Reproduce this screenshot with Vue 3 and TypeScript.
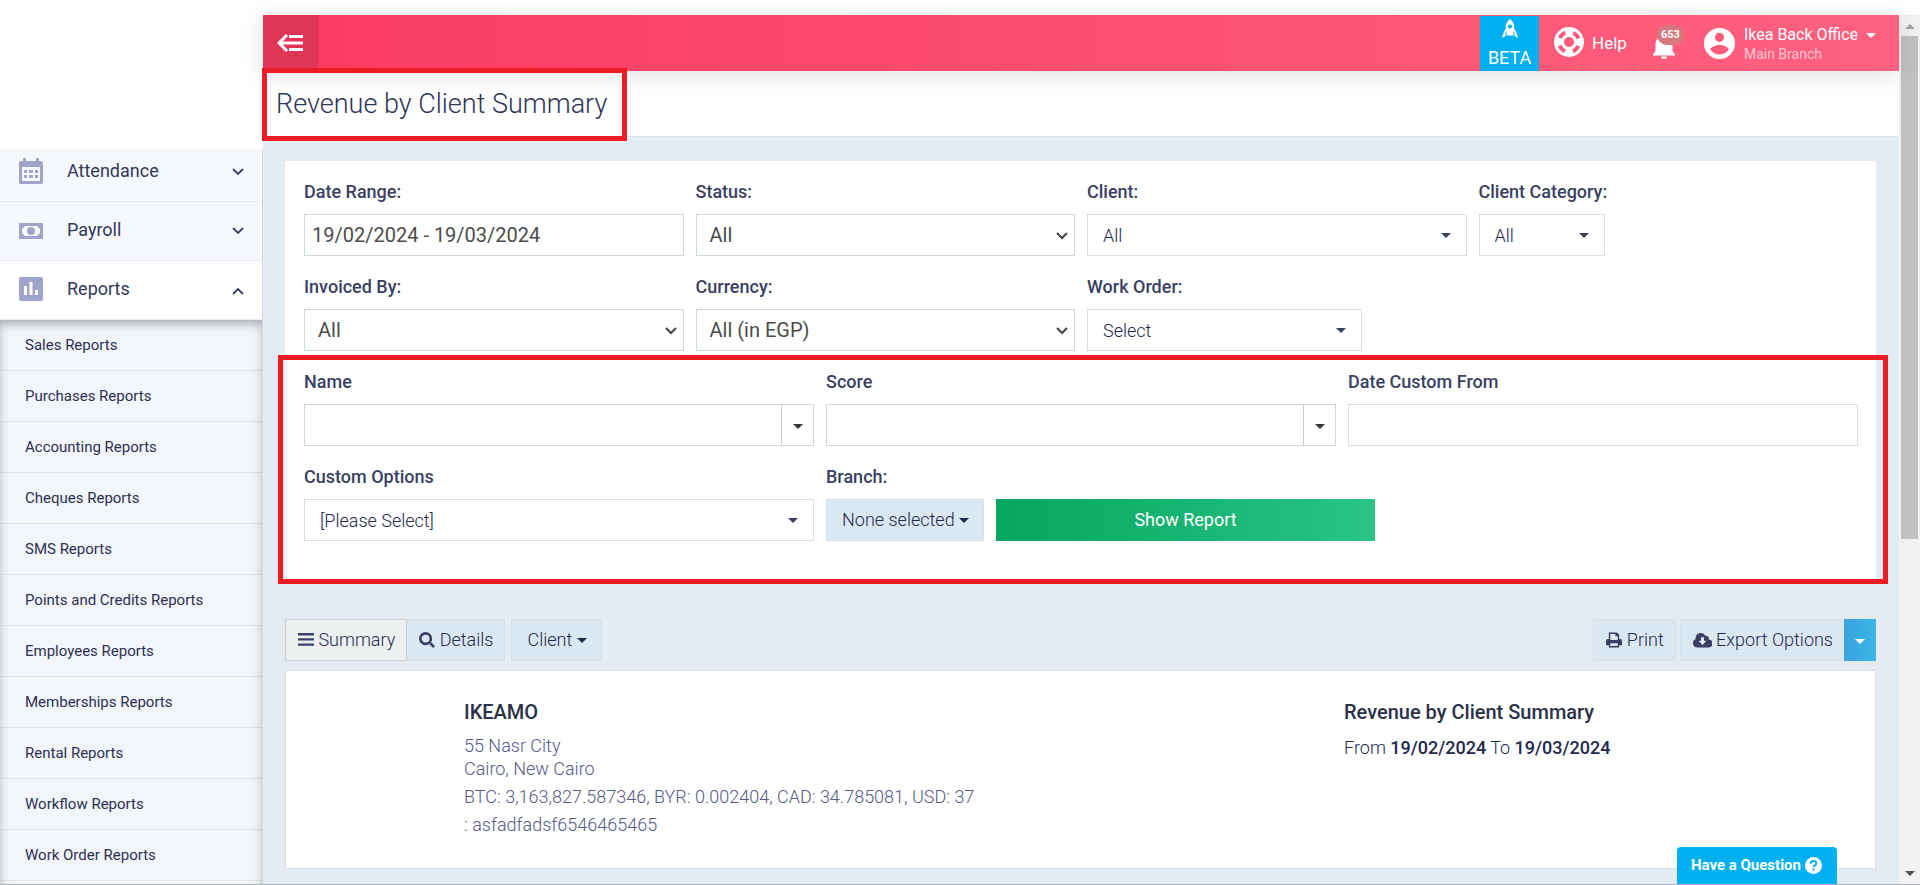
<script setup lang="ts">
import { ref } from 'vue'

interface MenuItem {
  label: string
  icon: 'calendar' | 'cash' | 'chart'
  open: boolean
}

const menu: MenuItem[] = [
  { label: 'Attendance', icon: 'calendar', open: false },
  { label: 'Payroll', icon: 'cash', open: false },
  { label: 'Reports', icon: 'chart', open: true },
]

const reports: string[] = [
  'Sales Reports',
  'Purchases Reports',
  'Accounting Reports',
  'Cheques Reports',
  'SMS Reports',
  'Points and Credits Reports',
  'Employees Reports',
  'Memberships Reports',
  'Rental Reports',
  'Workflow Reports',
  'Work Order Reports',
]

const dateRange = ref('19/02/2024 - 19/03/2024')
const nameFilter = ref('')
const scoreFilter = ref('')
const customFrom = ref('')
</script>

<template>
  <div class="shell">
    <aside class="sidebar">
      <div class="brand"></div>
      <nav class="menu" aria-label="Main">
        <button v-for="item in menu" :key="item.label" type="button" class="menu-item" :class="{ open: item.open }">
          <svg v-if="item.icon === 'calendar'" class="menu-icon" viewBox="0 0 24 26">
            <path fill-rule="evenodd" d="M4 0h3v3h10V0h3v3h2a2 2 0 0 1 2 2v19a2 2 0 0 1-2 2H2a2 2 0 0 1-2-2V5a2 2 0 0 1 2-2h2zM3 9v14h18V9zM5 12h3v3H5zM10 12h4v3h-4zM16 12h3v3h-3zM5 17h3v3H5zM10 17h4v3h-4zM16 17h3v3h-3z" />
          </svg>
          <svg v-else-if="item.icon === 'cash'" class="menu-icon" viewBox="0 -6 24 26">
            <path fill-rule="evenodd" d="M0 0h24v16H0zM6 3L3 6v4l3 3h12l3-3V6l-3-3z" />
            <circle cx="12" cy="8" r="4" />
          </svg>
          <svg v-else class="menu-icon" viewBox="0 -1 24 26">
            <path fill-rule="evenodd" d="M2 0h20a2 2 0 0 1 2 2v20a2 2 0 0 1-2 2H2a2 2 0 0 1-2-2V2a2 2 0 0 1 2-2zM5 9v9h3V9zM10.500 5v13h3V5zM16 13v5h3v-5z" />
          </svg>
          <span class="menu-label">{{ item.label }}</span>
          <svg class="menu-chevron" viewBox="0 0 12 8">
            <path :d="item.open ? 'M1 7l5-5 5 5' : 'M1 1l5 5 5-5'" />
          </svg>
        </button>
        <div class="submenu">
          <a v-for="name in reports" :key="name" href="#">{{ name }}</a>
        </div>
      </nav>
    </aside>

    <div class="main">
      <header class="topbar">
        <button type="button" class="toggle" aria-label="Collapse menu">
          <svg viewBox="0 0 26 18">
            <path d="M10 1L2 9l8 8M3 9h23M12 2.500h14M12 15.500h14" />
          </svg>
        </button>
        <div class="topbar-items">
          <a href="#" class="beta">
            <svg viewBox="0 0 16 19">
              <path fill-rule="evenodd" d="M8 0c3.500 2.500 4.600 6 4.300 10l1.700 2.500 2 6.500-4.500-2.500h-7L0 19l2-6.500L3.700 10C3.400 6 4.500 2.500 8 0zM8 5.400a2.100 2.100 0 1 0 0 4.200 2.100 2.100 0 0 0 0-4.200z" />
              <path class="beta-gap" d="M4 12.500v5M12 12.500v5" />
            </svg>
            <span>BETA</span>
          </a>
          <a href="#" class="help">
            <svg viewBox="0 0 30 30">
              <circle class="ring" cx="15" cy="15" r="13.500" />
              <circle class="ring" cx="15" cy="15" r="6.500" />
              <circle class="ring-wide" cx="15" cy="15" r="10" />
            </svg>
            <span>Help</span>
          </a>
          <button type="button" class="bell" aria-label="Notifications">
            <svg viewBox="0 0 22 26">
              <path d="M11 0a2 2 0 0 1 2 2v1c4 1 6.500 4 6.500 8v7.500l2.500 2.500v1.500H0V21l2.500-2.500V11c0-4 2.500-7 6.500-8V2a2 2 0 0 1 2-2zM8 23.500h6a3 2.500 0 0 1-6 0z" />
            </svg>
            <span class="count">653</span>
          </button>
          <button type="button" class="account">
            <svg class="avatar" viewBox="0 0 31 31">
              <path fill-rule="evenodd" d="M15.500 0a15.500 15.500 0 1 0 0 31 15.500 15.500 0 0 0 0-31zM15.500 4.700a4.600 4.600 0 1 1 0 9.200 4.600 4.600 0 0 1 0-9.200zM15.500 26.600a11 11 0 0 1-9.200-5c0-3.100 6.100-4.700 9.200-4.700s9.200 1.600 9.200 4.700a11 11 0 0 1-9.200 5z" />
            </svg>
            <span class="who">
              <span class="user">Ikea Back Office <i class="caret"></i></span>
              <span class="branch">Main Branch</span>
            </span>
          </button>
        </div>
      </header>

      <div class="title-band">
        <h1>Revenue by Client Summary</h1>
      </div>

      <main class="content">
        <form class="filters" @submit.prevent>
          <div class="row four">
            <div class="field">
              <label for="range">Date Range:</label>
              <input id="range" v-model="dateRange" type="text" class="control strong range" />
            </div>
            <div class="field">
              <label for="status">Status:</label>
              <div class="pick native">
                <select id="status" class="control strong"><option>All</option></select>
                <svg viewBox="0 0 12 8"><path d="M1 1l5 5 5-5" /></svg>
              </div>
            </div>
            <div class="field">
              <label for="client">Client:</label>
              <div class="pick">
                <select id="client" class="control"><option>All</option></select>
                <i class="caret"></i>
              </div>
            </div>
            <div class="field category">
              <label for="category">Client Category:</label>
              <div class="pick">
                <select id="category" class="control"><option>All</option></select>
                <i class="caret"></i>
              </div>
            </div>
          </div>
          <div class="row four">
            <div class="field">
              <label for="invoiced">Invoiced By:</label>
              <div class="pick native">
                <select id="invoiced" class="control strong"><option>All</option></select>
                <svg viewBox="0 0 12 8"><path d="M1 1l5 5 5-5" /></svg>
              </div>
            </div>
            <div class="field">
              <label for="currency">Currency:</label>
              <div class="pick native">
                <select id="currency" class="control strong"><option>All (in EGP)</option></select>
                <svg viewBox="0 0 12 8"><path d="M1 1l5 5 5-5" /></svg>
              </div>
            </div>
            <div class="field order">
              <label for="order">Work Order:</label>
              <div class="pick">
                <select id="order" class="control"><option>Select</option></select>
                <i class="caret"></i>
              </div>
            </div>
          </div>

          <div class="marked">
            <div class="row three">
              <div class="field">
                <label for="name">Name</label>
                <div class="combo">
                  <input id="name" v-model="nameFilter" type="text" />
                  <button type="button" aria-label="Show names"><i class="caret"></i></button>
                </div>
              </div>
              <div class="field">
                <label for="score">Score</label>
                <div class="combo">
                  <input id="score" v-model="scoreFilter" type="text" />
                  <button type="button" aria-label="Show scores"><i class="caret"></i></button>
                </div>
              </div>
              <div class="field">
                <label for="from">Date Custom From</label>
                <input id="from" v-model="customFrom" type="text" class="control" />
              </div>
            </div>
            <div class="row three">
              <div class="field">
                <label for="options">Custom Options</label>
                <div class="pick">
                  <select id="options" class="control"><option>[Please Select]</option></select>
                  <i class="caret"></i>
                </div>
              </div>
              <div class="actions">
                <div class="field">
                  <label for="branch">Branch:</label>
                  <button id="branch" type="button" class="btn wide">None selected <i class="caret"></i></button>
                </div>
                <button type="submit" class="show">Show Report</button>
              </div>
            </div>
          </div>
        </form>

        <div class="toolbar">
          <div class="group tabs">
            <button type="button" class="btn active">
              <svg class="ico" viewBox="0 0 16 14"><path d="M0 0h16v2.400H0zM0 5.200h16v2.400H0zM0 10.400h16v2.400H0z" /></svg>
              Summary
            </button>
            <button type="button" class="btn">
              <svg class="ico" viewBox="0 0 17 17"><path class="line" d="M12 12l4 4" /><circle class="line" cx="7" cy="7" r="5.600" /></svg>
              Details
            </button>
          </div>
          <button type="button" class="btn wide">Client <i class="caret"></i></button>
          <div class="right">
            <button type="button" class="btn">
              <svg class="ico" viewBox="0 0 17 16">
                <path fill-rule="evenodd" d="M3 0h8.500L14 2.500V7h1a2 2 0 0 1 2 2v4.500h-3V16H3v-2.500H0V9a2 2 0 0 1 2-2h1zM4.500 1.500V8h8V4H10V1.500zM4.500 11.500v3h8v-3z" />
              </svg>
              Print
            </button>
            <div class="group">
              <button type="button" class="btn">
                <svg class="ico cloud" viewBox="0 0 19 15">
                  <path fill-rule="evenodd" d="M4.500 15A4.500 4.500 0 0 1 2.600 6.400 5.300 5.300 0 0 1 12.500 3.300 2.800 2.800 0 0 1 15.700 7 4 4 0 0 1 15 15zM8 4.700v3.500H5.500L9.500 12.500l4-4.300H11V4.700z" />
                </svg>
                Export Options
              </button>
              <button type="button" class="btn blue" aria-label="More export options"><i class="caret"></i></button>
            </div>
          </div>
        </div>

        <section class="report">
          <div class="company">
            <h2>IKEAMO</h2>
            <p>55 Nasr City<br />Cairo, New Cairo</p>
            <p>BTC: 3,163,827.587346, BYR: 0.002404, CAD: 34.785081, USD: 37</p>
            <p>: asfadfadsf6546465465</p>
          </div>
          <div class="period">
            <h2>Revenue by Client Summary</h2>
            <p>From <b>19/02/2024</b> To <b>19/03/2024</b></p>
          </div>
        </section>
      </main>
    </div>

    <div class="scroll" aria-hidden="true">
      <i class="up"></i>
      <div class="thumb"></div>
      <i class="down"></i>
    </div>

    <button type="button" class="question">
      Have a Question
      <svg viewBox="0 0 17 17">
        <circle cx="8.500" cy="8.500" r="8.500" />
        <path d="M5.700 6.700c0-3.700 5.800-3.500 5.600-.3-.1 1.900-2.700 1.800-2.700 3.800M8.600 11.600v2" />
      </svg>
    </button>
  </div>
</template>

<style>
body {
  margin: 0;
  background: #fff;
}
</style>

<style scoped>
.shell {
  display: grid;
  grid-template-columns: 263px minmax(0, 1fr) 21px;
  height: 100vh;
  box-sizing: border-box;
  border-bottom: 1px solid #a9b3c2;
  overflow: hidden;
  font-family: Roboto, "Liberation Sans", sans-serif;
  color: #3a3f63;
}
.shell *, .shell *::after { box-sizing: border-box; }
button, input, select { font: inherit; color: inherit; border-radius: 0; margin: 0; }
button { cursor: pointer; }
a { color: inherit; text-decoration: none; }

.caret {
  display: inline-block;
  border: 5px solid transparent;
  border-top-color: currentColor;
  border-bottom: 0;
  vertical-align: middle;
}

/* sidebar */
.sidebar { min-height: 0; overflow: hidden; }
.brand { position: relative; z-index: 1; height: 149px; background: #fff; }
.menu { margin-top: -6px; border-right: 1px solid #d5d9df; }
.menu-item {
  display: flex;
  align-items: center;
  width: 100%;
  height: 59px;
  padding: 0 18px 2px 19px;
  border: 0;
  border-bottom: 1px solid #e9edf1;
  background: #f5f9fd;
  font-size: 18px;
  color: #33375a;
  text-align: left;
}
.menu-item.open { background: #fff; }
.menu-icon { width: 24px; height: 26px; fill: #a0a4cb; }
.menu-label { flex: 1; margin-left: 24px; padding-bottom: 2px; }
.menu-chevron { width: 12px; height: 8px; margin-top: 2px; fill: none; stroke: #3a3f63; stroke-width: 1.800; }
.menu-item.open .menu-chevron { margin-top: 4px; }
.submenu {
  background: #f2f5fa;
  box-shadow: inset 0 6px 10px -2px rgba(60, 65, 75, .35), inset 0 0 14px rgba(60, 65, 75, .1);
}
.submenu a {
  display: flex;
  align-items: center;
  height: 51px;
  padding-left: 25px;
  border-bottom: 1px solid rgba(70, 80, 90, .1);
  font-size: 15px;
  color: #2c3054;
}
.submenu::after { content: ""; display: block; height: 51px; }

/* top bar */
.main { display: flex; flex-direction: column; min-width: 0; padding-top: 15px; }
.topbar {
  position: relative;
  z-index: 1;
  display: flex;
  justify-content: space-between;
  flex: none;
  height: 56px;
  background: linear-gradient(90deg, #f93c60, #ff6180);
  box-shadow: 0 4px 24px rgba(0, 0, 0, .12);
  color: #fff;
}
.toggle { width: 56px; padding: 4px 2px 0 0; border: 0; background: #df3655; }
.toggle svg { width: 26px; height: 18px; fill: none; stroke: #fff; stroke-width: 3; }
.topbar-items { display: flex; align-items: center; padding-right: 23px; }
.topbar button:not(.toggle) { padding: 0; border: 0; background: none; }
.beta {
  display: flex;
  flex-direction: column;
  align-items: center;
  justify-content: space-between;
  align-self: flex-end;
  width: 59px;
  height: 55px;
  padding: 3px 0 2px;
  background: #00b0f0;
  font-size: 18px;
  line-height: 22px;
}
.beta svg { width: 16px; height: 19px; fill: #fff; }
.beta-gap { stroke: #00b0f0; stroke-width: 1; }
.help { display: flex; align-items: center; gap: 8px; margin-left: 15px; font-size: 17px; }
.help svg { width: 30px; height: 30px; margin-bottom: 2px; fill: none; stroke: #fff; }
.ring { stroke-width: 3; }
.ring-wide { stroke-width: 6; stroke-dasharray: 8 7.700; stroke-dashoffset: 4; }
.bell { position: relative; width: 32px; height: 32px; margin-left: 26px; }
.bell svg { position: absolute; left: 0; bottom: 0; width: 22px; height: 26px; fill: #fff; }
.count {
  position: absolute;
  top: -2px;
  left: 4px;
  padding: 0 4px;
  border-radius: 10px;
  background: #d9777e;
  font-size: 11px;
  font-weight: 700;
  line-height: 20px;
}
.account { display: flex; align-items: center; gap: 9px; margin-left: 19px; text-align: left; }
.avatar { width: 31px; height: 31px; fill: #fff; }
.who { display: flex; flex-direction: column; padding-top: 2px; }
.user { font-size: 16px; line-height: 20px; }
.user .caret { margin-left: 4px; }
.branch { font-size: 14px; line-height: 18px; color: #ffc4d0; }

/* title */
.title-band {
  flex: none;
  display: flex;
  align-items: center;
  height: 66px;
  padding: 2px 13px 0;
  border-bottom: 1px solid #dae4ea;
  background: #fff;
}
h1 { position: relative; z-index: 2; margin: 0; font-size: 27px; font-weight: 300; line-height: 33px; color: #2f3457; }
h1::after {
  content: "";
  position: absolute;
  inset: -20px -20px -20px -14px;
  border: 5px solid #ed1c24;
}

/* filters */
.content { flex: 1; min-height: 0; padding: 24px 23px 0 22px; background: #e4ebf3; }
.filters { padding: 20px 18px 39px 19px; background: #fff; }
.row { display: grid; gap: 12px; margin-bottom: 20px; }
.four { grid-template-columns: repeat(4, minmax(0, 1fr)); }
.three { grid-template-columns: repeat(3, minmax(0, 1fr)); }
.field { display: flex; flex-direction: column; gap: 11px; }
.field label { font-size: 18px; font-weight: 500; line-height: 22px; white-space: nowrap; }
.category { width: 126px; }
.order { width: 275px; }
.control {
  display: block;
  width: 100%;
  height: 42px;
  padding: 0 15px;
  border: 1px solid #d6e0e4;
  background: #fff;
  font-size: 18px;
  font-weight: 300;
  color: #23284f;
  outline: 0;
  appearance: none;
}
.strong { padding: 0 13px; border-color: #cdd9dc; font-size: 20px; font-weight: 400; color: #4c4c4c; }
.range { padding: 0 7px; }
.pick { position: relative; }
.pick .caret { position: absolute; top: 19px; right: 16px; pointer-events: none; }
.pick svg {
  position: absolute;
  top: 18px;
  right: 7px;
  width: 12px;
  height: 8px;
  fill: none;
  stroke: #444;
  stroke-width: 2;
  pointer-events: none;
}
.combo { display: flex; height: 42px; border: 1px solid #cdd9dc; }
.combo input { flex: 1; min-width: 0; border: 0; padding: 0 13px; font-size: 18px; outline: 0; background: none; }
.combo button {
  display: grid;
  place-items: center;
  width: 32px;
  padding: 3px 0 0;
  border: 0;
  border-left: 1px solid #ccc;
  background: #fff;
  color: #333;
}
.marked { position: relative; }
.marked .row:last-child { margin-bottom: 0; }
.marked::after {
  content: "";
  position: absolute;
  inset: -16px -30px -43px -26px;
  border: 5px solid #ed1c24;
  pointer-events: none;
}
.actions { grid-column: span 2; display: flex; align-items: flex-end; gap: 12px; }
.show {
  width: 379px;
  height: 42px;
  padding: 0 0 2px;
  border: 0;
  background: linear-gradient(90deg, #05a660, #29c486);
  font-size: 18px;
  color: #fff;
}

/* toolbar */
.btn {
  height: 42px;
  padding: 0 11px 2px 12px;
  border: 1px solid #d6e0e6;
  background: #dbe7f3;
  font-size: 18px;
  font-weight: 300;
  color: #23284f;
  white-space: nowrap;
}
.btn.wide { padding: 0 14px 2px 15px; }
.btn.active { position: relative; border-color: #c5d0d5; background: #ecf0f1; }
.ico { width: 16px; height: 16px; fill: #3a3f63; vertical-align: -2px; }
.ico.cloud { width: 19px; }
.line { fill: none; stroke: #3a3f63; stroke-width: 2.800; }
.toolbar { display: flex; align-items: center; gap: 6px; margin-top: 39px; }
.group { display: flex; }
.tabs .btn + .btn { margin-left: -1px; }
.right { display: flex; gap: 4px; margin-left: auto; }
.group .btn:not(:last-child) { border-right-width: 0; }
.tabs .btn.active { border-right-width: 1px; }
.btn.blue { width: 32px; padding: 0; border: 0; background: linear-gradient(90deg, #3aa3dd, #39b6e6); color: #fff; }

/* report */
.report {
  display: flex;
  margin-top: 9px;
  min-height: 199px;
  padding: 29px 18px 18px 178px;
  border: 1px solid #d6e0e4;
  background: #fff;
}
.company { flex: 880; color: #555a88; }
.period { flex: 513; color: #23284f; }
.report h2 { margin: 0 0 10px; font-size: 20px; font-weight: 500; line-height: 24px; color: #2c3048; }
.report p { margin: 0 0 5px; font-size: 18px; font-weight: 300; line-height: 23px; }
.report .period p { line-height: 28px; }
.period b { font-weight: 500; }

/* scrollbar */
.scroll {
  display: flex;
  flex-direction: column;
  align-items: center;
  margin-top: 15px;
  padding: 9px 2px 8px;
  background: #f1f1f1;
}
.scroll .up, .scroll .down { border: 5px solid transparent; }
.scroll .up { border-bottom-color: #a3a3a3; border-top: 0; }
.scroll .down { margin-top: auto; border-top-color: #505050; border-bottom: 0; }
.thumb { width: 17px; height: 59%; margin-top: 7px; background: #c1c1c1; }

.question {
  position: fixed;
  right: 83px;
  bottom: 1px;
  display: flex;
  align-items: center;
  gap: 4px;
  height: 37px;
  padding: 0 15px 1px 14px;
  border: 0;
  border-radius: 4px 4px 0 0;
  background: #00b0f0;
  font-size: 15px;
  font-weight: 700;
  color: #fff;
}
.question svg { width: 17px; height: 17px; fill: #fff; }
.question path { fill: none; stroke: #00b0f0; stroke-width: 2; }
</style>
